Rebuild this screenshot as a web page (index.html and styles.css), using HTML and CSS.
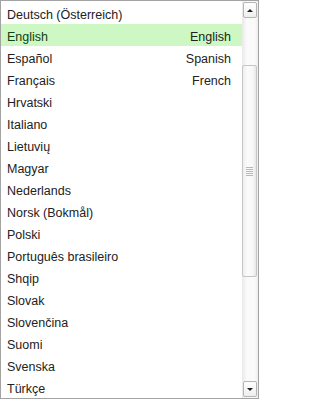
FILE: index.html
```html
<!DOCTYPE html>
<html>
<head>
<meta charset="utf-8">
<link rel="stylesheet" href="styles.css">
</head>
<body>
<div class="box">
  <div class="list">
    <div class="row"><span>Deutsch (Österreich)</span></div>
    <div class="row selected"><span>English</span><span class="alt">English</span></div>
    <div class="row"><span>Español</span><span class="alt">Spanish</span></div>
    <div class="row"><span>Français</span><span class="alt">French</span></div>
    <div class="row"><span>Hrvatski</span></div>
    <div class="row"><span>Italiano</span></div>
    <div class="row"><span>Lietuvių</span></div>
    <div class="row"><span>Magyar</span></div>
    <div class="row"><span>Nederlands</span></div>
    <div class="row"><span>Norsk (Bokmål)</span></div>
    <div class="row"><span>Polski</span></div>
    <div class="row"><span>Português brasileiro</span></div>
    <div class="row"><span>Shqip</span></div>
    <div class="row"><span>Slovak</span></div>
    <div class="row"><span>Slovenčina</span></div>
    <div class="row"><span>Suomi</span></div>
    <div class="row"><span>Svenska</span></div>
    <div class="row"><span>Türkçe</span></div>
  </div>
  <div class="scrollbar">
    <div class="btn"><span class="arrow up"></span></div>
    <div class="track">
      <div class="thumb"><span class="grip"></span></div>
    </div>
    <div class="btn"><span class="arrow down"></span></div>
  </div>
</div>
</body>
</html>
```
FILE: styles.css
```css
html, body {
  margin: 0;
  padding: 0;
  background: #fff;
}
.box {
  box-sizing: border-box;
  width: 259px;
  height: 399px;
  border: 1px solid #a3a3a3;
  display: flex;
  overflow: hidden;
  font-family: "Liberation Sans", Arial, sans-serif;
  font-size: 12.5px;
  color: #222;
}
.list {
  flex: 1;
  padding-top: 1px;
  overflow: hidden;
}
.row {
  box-sizing: border-box;
  height: 22px;
  display: flex;
  align-items: center;
  justify-content: space-between;
  padding: 3px 11px 0 6px;
  white-space: nowrap;
}
.row.selected {
  background: #cdf8c3;
  color: #124012;
}
.row.selected .alt {
  color: #222;
}
.scrollbar {
  width: 16px;
  display: flex;
  flex-direction: column;
  padding: 1px 0 1px 0;
  background: linear-gradient(to right, #e9e9e9, #fafafa 30%, #fafafa 80%, #ececec);
}
.btn {
  box-sizing: border-box;
  height: 16px;
  margin: 0 1px 0 1px;
  border: 1px solid #b5b5b5;
  border-radius: 2px;
  background: linear-gradient(#ffffff, #eeeeee);
  display: flex;
  align-items: center;
  justify-content: center;
}
.arrow {
  width: 0;
  height: 0;
  border-left: 3px solid transparent;
  border-right: 3px solid transparent;
}
.arrow.up {
  border-bottom: 3px solid #222;
}
.arrow.down {
  border-top: 3px solid #222;
}
.track {
  flex: 1;
  padding-top: 47px;
  padding-bottom: 104px;
  display: flex;
  flex-direction: column;
}
.thumb {
  flex: 1;
  box-sizing: border-box;
  margin: 0 1px 0 0;
  border: 1px solid #c6c6c6;
  border-radius: 2px;
  background: linear-gradient(to right, #eeeeee, #fbfbfb 35%, #f7f7f7 75%, #e6e6e6);
  display: flex;
  align-items: center;
  justify-content: center;
}
.grip {
  width: 7px;
  height: 9px;
  background: repeating-linear-gradient(#b8b8b8 0 1px, transparent 1px 2px);
}
```
